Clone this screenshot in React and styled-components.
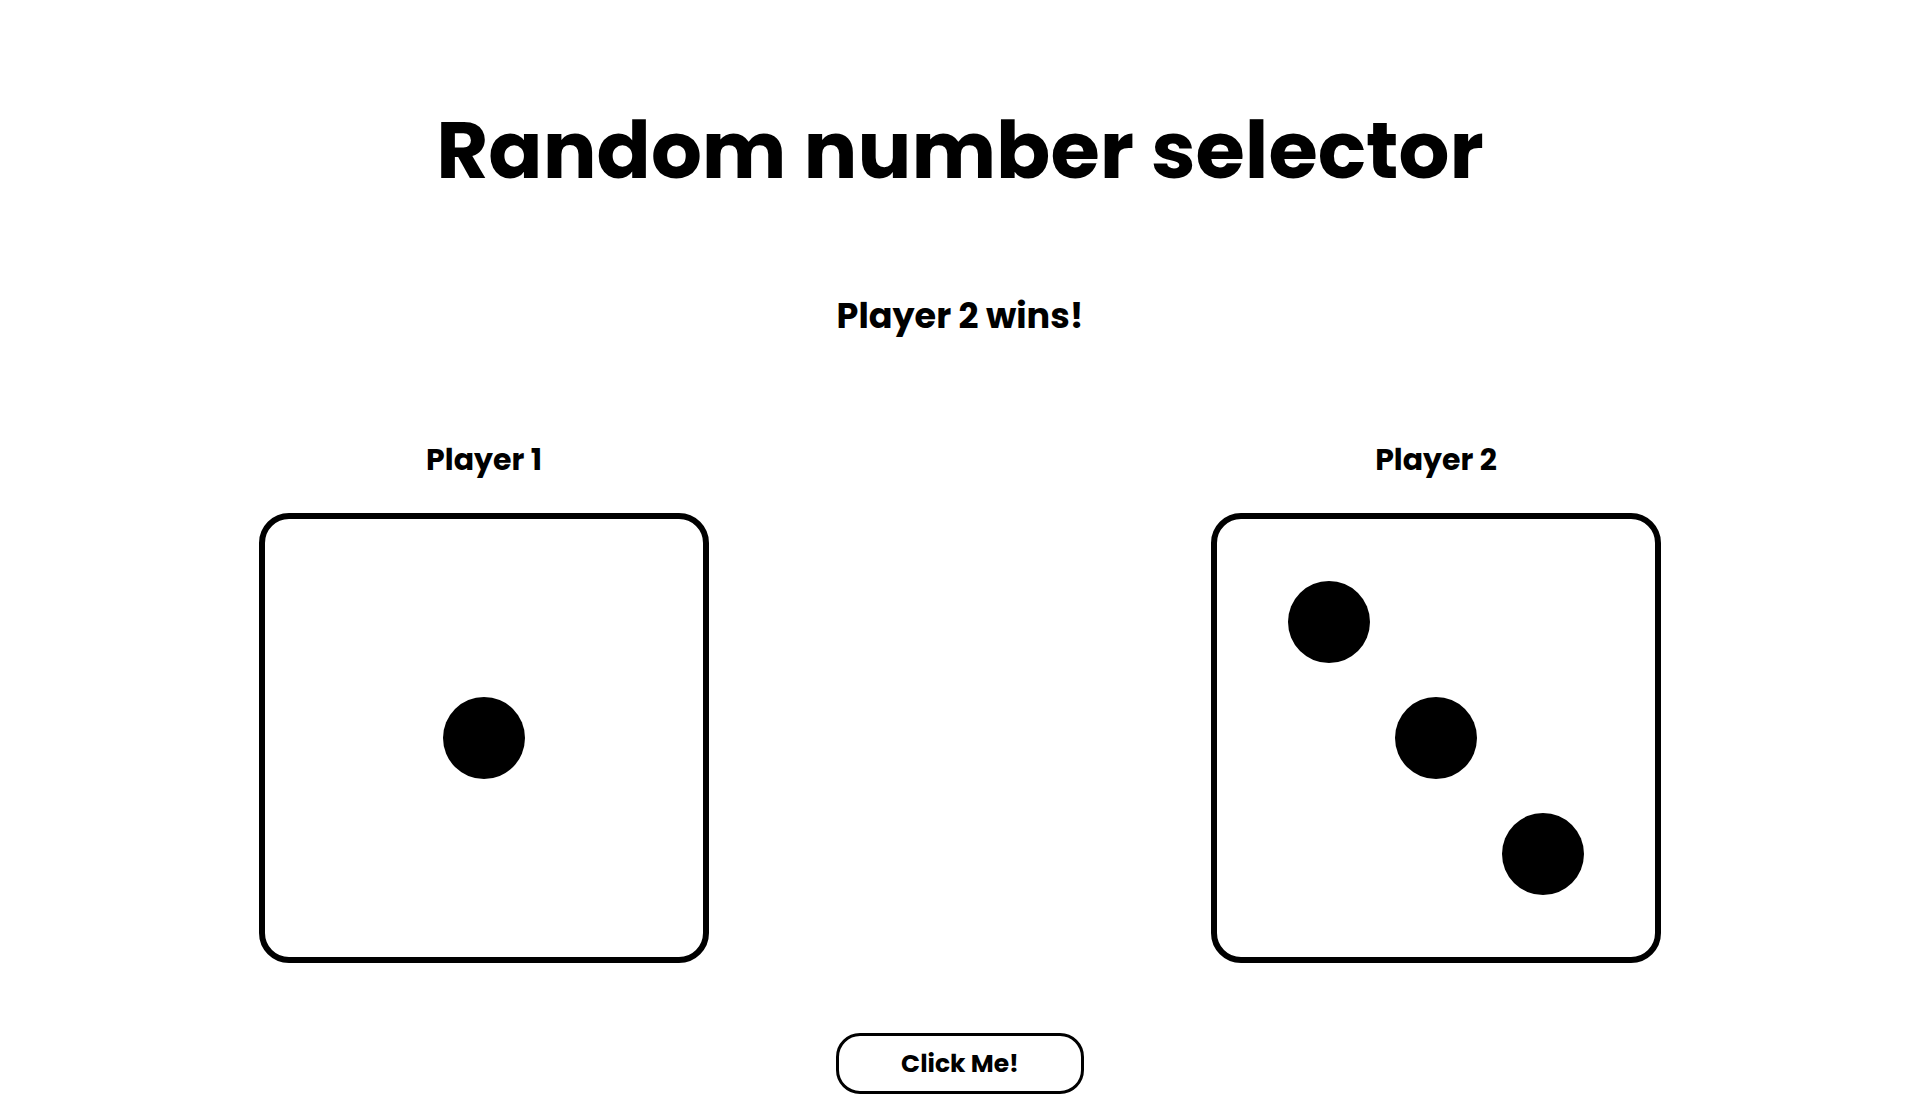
import React, { useState } from 'react'
import styled, { createGlobalStyle } from 'styled-components'

const GlobalStyle = createGlobalStyle`
  * { box-sizing: border-box; }
  body {
    margin: 0;
    background: #fff;
    color: #000;
    font-family: Poppins, "Open Sans", sans-serif;
  }
`

const Page = styled.div`
  display: flex;
  flex-direction: column;
  align-items: center;
  padding-top: 110px;
`

const Title = styled.h1`
  margin: 0;
  font-size: 80px;
  line-height: 1;
  font-weight: 700;
`

const Result = styled.h2`
  margin: 108px 0 0;
  font-size: 35px;
  line-height: 1;
  font-weight: 700;
`

const Board = styled.div`
  width: 100%;
  display: flex;
  justify-content: space-around;
  padding: 0 8px;
  margin-top: 112px;
`

const PlayerCol = styled.div`
  display: flex;
  flex-direction: column;
  align-items: center;
  gap: 38px;
`

const PlayerName = styled.h3`
  margin: 0;
  font-size: 30px;
  line-height: 1;
  font-weight: 700;
`

const Die = styled.div`
  width: 450px;
  height: 450px;
  border: 6px solid #000;
  border-radius: 30px;
  display: grid;
  grid-template-columns: repeat(3, 1fr);
  grid-template-rows: repeat(3, 1fr);
  padding: 45px 59px;
  place-items: center;
`

const Pip = styled.span`
  width: 82px;
  height: 82px;
  border-radius: 50%;
  background: #000;
  grid-row: ${p => p.$row};
  grid-column: ${p => p.$col};
`

const Button = styled.button`
  margin-top: 70px;
  width: 248px;
  height: 61px;
  border: 3px solid #000;
  border-radius: 24px;
  background: #fff;
  color: #000;
  font-family: Poppins, "Open Sans", sans-serif;
  font-size: 25px;
  font-weight: 700;
  cursor: pointer;
`

const layouts = {
  1: [[2, 2]],
  2: [[1, 1], [3, 3]],
  3: [[1, 1], [2, 2], [3, 3]],
  4: [[1, 1], [1, 3], [3, 1], [3, 3]],
  5: [[1, 1], [1, 3], [2, 2], [3, 1], [3, 3]],
  6: [[1, 1], [2, 1], [3, 1], [1, 3], [2, 3], [3, 3]],
}

const DieFace = ({ value }) => (
  <Die>
    {layouts[value].map(([r, c], i) => <Pip key={i} $row={r} $col={c} />)}
  </Die>
)

const roll = () => Math.floor(Math.random() * 6) + 1

export default function App() {
  const [dice, setDice] = useState([1, 3])

  const winner = dice[0] === dice[1]
    ? "It's a draw!"
    : dice[0] > dice[1] ? 'Player 1 wins!' : 'Player 2 wins!'

  return (
    <Page>
      <GlobalStyle />
      <Title>Random number selector</Title>
      <Result>{winner}</Result>
      <Board>
        <PlayerCol>
          <PlayerName>Player 1</PlayerName>
          <DieFace value={dice[0]} />
        </PlayerCol>
        <PlayerCol>
          <PlayerName>Player 2</PlayerName>
          <DieFace value={dice[1]} />
        </PlayerCol>
      </Board>
      <Button onClick={() => setDice([roll(), roll()])}>Click Me!</Button>
    </Page>
  )
}
